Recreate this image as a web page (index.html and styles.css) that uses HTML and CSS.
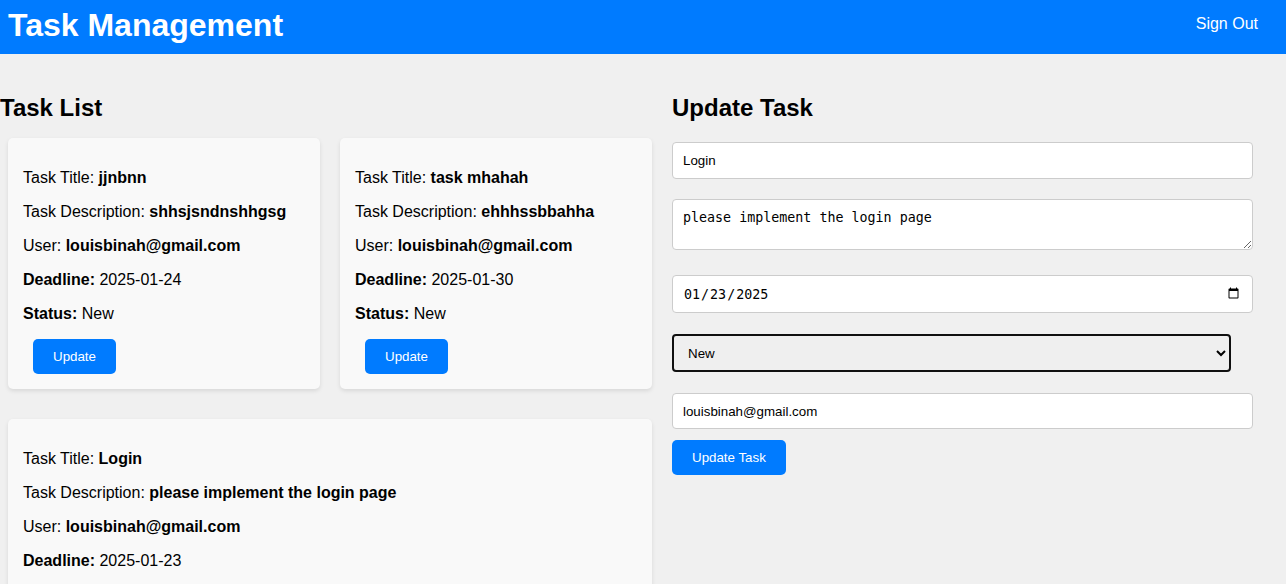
FILE: index.html
```html
<!DOCTYPE html>
<html lang="en">
<head>
<meta charset="utf-8">
<title>Task Management</title>
<link rel="stylesheet" href="styles.css">
</head>
<body>
<header class="topbar">
  <h1 class="brand">Task Management</h1>
  <button class="signout">Sign Out</button>
</header>
<main class="layout">
  <section class="list-col">
    <h2 class="section-title">Task List</h2>
    <div class="cards">
      <div class="card">
        <p>Task Title: <strong>jjnbnn</strong></p>
        <p>Task Description: <strong>shhsjsndnshhgsg</strong></p>
        <p>User: <strong>louisbinah@gmail.com</strong></p>
        <p><strong>Deadline:</strong> 2025-01-24</p>
        <p><strong>Status:</strong> New</p>
        <button class="btn card-btn">Update</button>
      </div>
      <div class="card">
        <p>Task Title: <strong>task mhahah</strong></p>
        <p>Task Description: <strong>ehhhssbbahha</strong></p>
        <p>User: <strong>louisbinah@gmail.com</strong></p>
        <p><strong>Deadline:</strong> 2025-01-30</p>
        <p><strong>Status:</strong> New</p>
        <button class="btn card-btn">Update</button>
      </div>
      <div class="card card-wide">
        <p>Task Title: <strong>Login</strong></p>
        <p>Task Description: <strong>please implement the login page</strong></p>
        <p>User: <strong>louisbinah@gmail.com</strong></p>
        <p><strong>Deadline:</strong> 2025-01-23</p>
        <p><strong>Status:</strong> New</p>
        <button class="btn card-btn">Update</button>
      </div>
    </div>
  </section>
  <section class="form-col">
    <h2 class="section-title">Update Task</h2>
    <form class="task-form">
      <input class="field field-title" type="text" value="Login">
      <textarea class="field field-desc">please implement the login page</textarea>
      <input class="field field-date" type="date" value="2025-01-23">
      <select class="field-select">
        <option>New</option>
        <option>In Progress</option>
        <option>Completed</option>
      </select>
      <input class="field field-user" type="email" value="louisbinah@gmail.com">
      <button type="button" class="btn submit-btn">Update Task</button>
    </form>
  </section>
</main>
</body>
</html>
```
FILE: styles.css
```css
html, body {
  margin: 0;
  padding: 0;
}
body {
  background: #f0f0f0;
  font-family: "Liberation Sans", Arial, sans-serif;
  color: #000;
}
.topbar {
  height: 54px;
  box-sizing: border-box;
  background: #007bff;
  display: flex;
  align-items: flex-start;
  justify-content: space-between;
  padding: 0 8px;
}
.brand {
  margin: 7px 0 0;
  font-size: 32px;
  line-height: 37px;
  font-weight: bold;
  color: #fff;
}
.signout {
  margin-top: 5px;
  background: none;
  border: none;
  color: #fff;
  font-family: "Liberation Sans", Arial, sans-serif;
  font-size: 16px;
  line-height: 18px;
  padding: 10px 20px;
  cursor: pointer;
}
.layout {
  display: flex;
  gap: 12px;
  padding-top: 20px;
}
.list-col {
  width: 660px;
  flex: none;
}
.form-col {
  width: 559px;
  flex: none;
}
.section-title {
  font-size: 24px;
  font-weight: bold;
  margin: 20px 0 16px;
  line-height: 28px;
}
.cards {
  display: grid;
  grid-template-columns: 312px 312px;
  column-gap: 20px;
  row-gap: 30px;
  padding: 0 8px;
}
.card {
  background: #f9f9f9;
  border-radius: 5px;
  box-shadow: 0 2px 4px rgba(0, 0, 0, 0.1);
  padding: 15px;
  box-sizing: border-box;
  font-size: 16px;
}
.card p {
  margin: 16px 0;
  line-height: 18px;
}
.card-wide {
  grid-column: 1 / -1;
}
.btn {
  background: #007bff;
  color: #fff;
  border: none;
  border-radius: 5px;
  padding: 10px 20px;
  font-family: "Liberation Sans", Arial, sans-serif;
  font-size: 13.333px;
  line-height: 15px;
  cursor: pointer;
}
.card-btn {
  display: block;
  margin-left: 10px;
}
.task-form {
  padding-top: 4px;
  display: flex;
  flex-direction: column;
  align-items: flex-start;
}
.field {
  display: block;
  width: 100%;
  box-sizing: content-box;
  padding: 10px;
  border: 1px solid #ccc;
  border-radius: 4px;
  background: #fff;
  font-family: "Liberation Sans", Arial, sans-serif;
  font-size: 13.333px;
  line-height: 15px;
  height: 15px;
  color: #000;
  margin: 0;
}
.field-desc {
  font-family: "DejaVu Sans Mono", monospace;
  height: 29px;
  margin-top: 20px;
  resize: vertical;
}
.field-date {
  font-family: "DejaVu Sans Mono", monospace;
  height: 16px;
  margin-top: 25px;
}
.field-select {
  display: block;
  box-sizing: border-box;
  width: 559px;
  height: 38px;
  margin-top: 21px;
  padding: 0 10px;
  border: 2px solid #101010;
  border-radius: 4px;
  background-color: #efefef;
  font-family: "Liberation Sans", Arial, sans-serif;
  font-size: 13.333px;
  color: #000;
}
.field-user {
  margin-top: 21px;
  height: 14px;
}
.submit-btn {
  margin-top: 11px;
}
```
